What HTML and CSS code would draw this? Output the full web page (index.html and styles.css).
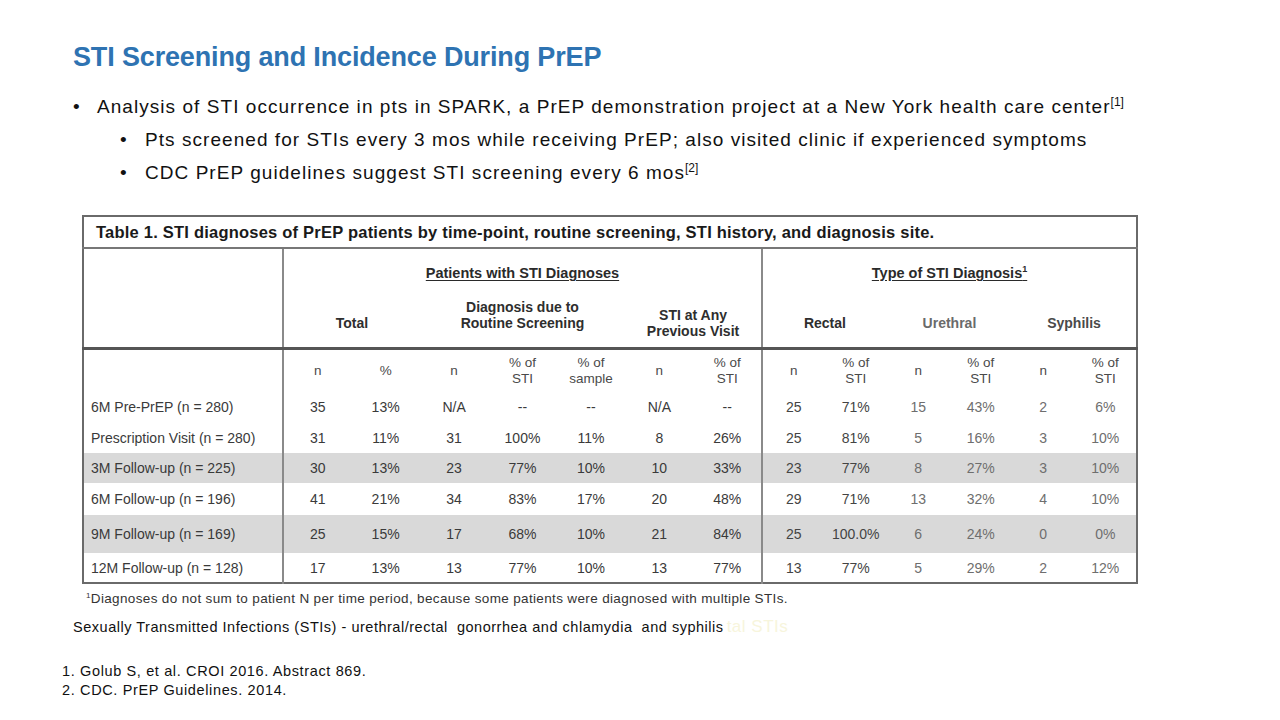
FILE: index.html
```html
<!DOCTYPE html>
<html>
<head>
<meta charset="utf-8">
<link rel="stylesheet" href="styles.css">
</head>
<body>
<div class="slide">
  <h1 class="title">STI Screening and Incidence During PrEP</h1>
  <ul class="bullets">
    <li class="l1">Analysis of STI occurrence in pts in SPARK, a PrEP demonstration project at a New York health care center<sup>[1]</sup></li>
    <li class="l2">Pts screened for STIs every 3 mos while receiving PrEP; also visited clinic if experienced symptoms</li>
    <li class="l2">CDC PrEP guidelines suggest STI screening every 6 mos<sup>[2]</sup></li>
  </ul>
  <div class="table-wrap">
    <table class="sti">
      <colgroup>
        <col class="c-label">
        <col class="c-l"><col class="c-l"><col class="c-l"><col class="c-l"><col class="c-l"><col class="c-l"><col class="c-l">
        <col class="c-r"><col class="c-r"><col class="c-r"><col class="c-r"><col class="c-r"><col class="c-r">
      </colgroup>
      <tr class="cap-row">
        <td colspan="14" class="caption">Table 1. STI diagnoses of PrEP patients by time-point, routine screening, STI history, and diagnosis site.</td>
      </tr>
      <tr class="h1-row">
        <td rowspan="2" class="lab-blank vdiv"></td>
        <td colspan="7" class="grp vdiv"><span class="u">Patients with STI Diagnoses</span></td>
        <td colspan="6" class="grp"><span class="u">Type of STI Diagnosis<sup>1</sup></span></td>
      </tr>
      <tr class="h2-row">
        <td colspan="2" class="sub">Total</td>
        <td colspan="3" class="sub">Diagnosis due to<br>Routine Screening</td>
        <td colspan="2" class="sub low vdiv">STI at Any<br>Previous Visit</td>
        <td colspan="2" class="sub">Rectal</td>
        <td colspan="2" class="sub lt">Urethral</td>
        <td colspan="2" class="sub mid">Syphilis</td>
      </tr>
      <tr class="h3-row">
        <td class="vdiv"></td>
        <td>n</td><td>%</td><td>n</td><td>% of<br>STI</td><td>% of<br>sample</td><td>n</td><td class="vdiv">% of<br>STI</td>
        <td>n</td><td>% of<br>STI</td><td>n</td><td>% of<br>STI</td><td>n</td><td>% of<br>STI</td>
      </tr>
      <tr class="d r1">
        <td class="lab vdiv">6M Pre-PrEP (n = 280)</td>
        <td>35</td><td>13%</td><td>N/A</td><td>--</td><td>--</td><td>N/A</td><td class="vdiv">--</td>
        <td class="dk">25</td><td class="dk">71%</td><td>15</td><td>43%</td><td>2</td><td>6%</td>
      </tr>
      <tr class="d r2">
        <td class="lab vdiv">Prescription Visit (n = 280)</td>
        <td>31</td><td>11%</td><td>31</td><td>100%</td><td>11%</td><td>8</td><td class="vdiv">26%</td>
        <td class="dk">25</td><td class="dk">81%</td><td>5</td><td>16%</td><td>3</td><td>10%</td>
      </tr>
      <tr class="d r3 shade">
        <td class="lab vdiv">3M Follow-up (n = 225)</td>
        <td>30</td><td>13%</td><td>23</td><td>77%</td><td>10%</td><td>10</td><td class="vdiv">33%</td>
        <td class="dk">23</td><td class="dk">77%</td><td>8</td><td>27%</td><td>3</td><td>10%</td>
      </tr>
      <tr class="d r4">
        <td class="lab vdiv">6M Follow-up (n = 196)</td>
        <td>41</td><td>21%</td><td>34</td><td>83%</td><td>17%</td><td>20</td><td class="vdiv">48%</td>
        <td class="dk">29</td><td class="dk">71%</td><td>13</td><td>32%</td><td>4</td><td>10%</td>
      </tr>
      <tr class="d r5 shade">
        <td class="lab vdiv">9M Follow-up (n = 169)</td>
        <td>25</td><td>15%</td><td>17</td><td>68%</td><td>10%</td><td>21</td><td class="vdiv">84%</td>
        <td class="dk">25</td><td class="dk">100.0%</td><td>6</td><td>24%</td><td>0</td><td>0%</td>
      </tr>
      <tr class="d r6">
        <td class="lab vdiv">12M Follow-up (n = 128)</td>
        <td>17</td><td>13%</td><td>13</td><td>77%</td><td>10%</td><td>13</td><td class="vdiv">77%</td>
        <td class="dk">13</td><td class="dk">77%</td><td>5</td><td>29%</td><td>2</td><td>12%</td>
      </tr>
    </table>
    <p class="tnote"><sup>1</sup>Diagnoses do not sum to patient N per time period, because some patients were diagnosed with multiple STIs.</p>
  </div>
  <p class="defn">Sexually Transmitted Infections (STIs) - urethral/rectal&nbsp; gonorrhea and chlamydia&nbsp; and syphilis<span class="ghost">tal STIs</span></p>
  <ol class="refs">
    <li>Golub S, et al. CROI 2016. Abstract 869.</li>
    <li>CDC. PrEP Guidelines. 2014.</li>
  </ol>
</div>
</body>
</html>
```
FILE: styles.css
```css
html, body {
  margin: 0;
  padding: 0;
  background: #ffffff;
}
.slide {
  width: 1280px;
  height: 720px;
  box-sizing: border-box;
  padding: 39px 0 0 0;
  font-family: "Liberation Sans", Arial, sans-serif;
  color: #111;
  overflow: hidden;
}
.title {
  margin: 0 0 0 73px;
  font-size: 27px;
  line-height: 36px;
  font-weight: bold;
  color: #2e73b2;
  letter-spacing: -0.15px;
}
.bullets {
  list-style: none;
  margin: 15px 0 0 0;
  padding: 0;
  font-size: 19px;
  line-height: 33px;
  letter-spacing: 1.05px;
  color: #111;
}
.bullets li {
  position: relative;
}
.bullets li::before {
  content: "•";
  position: absolute;
  top: 0;
}
.bullets .l1 {
  padding-left: 97px;
}
.bullets .l1::before {
  left: 73px;
}
.bullets .l2 {
  padding-left: 145px;
}
.bullets .l2::before {
  left: 120px;
}
.bullets sup {
  font-size: 12px;
  line-height: 0;
  vertical-align: 7px;
  letter-spacing: 0;
}
.table-wrap {
  margin: 26px 0 0 82px;
  width: 1054px;
}
.sti {
  border-collapse: collapse;
  table-layout: fixed;
  width: 1054px;
  border: 2px solid #6a6a6a;
  font-size: 14px;
  color: #3c3c3c;
}
.c-label { width: 200px; }
.c-l { width: 68.43px; }
.c-r { width: 62.5px; }
.sti td {
  padding: 0;
  text-align: center;
  vertical-align: middle;
}
.sti .vdiv {
  border-right: 2px solid #8a8a8a;
}
.cap-row td {
  height: 30px;
  border-bottom: 2px solid #777;
  text-align: left;
  padding-left: 12px;
  font-weight: bold;
  font-size: 16.5px;
  letter-spacing: 0.22px;
  color: #1a1a1a;
}
.h1-row td {
  height: 48px;
}
.grp {
  font-weight: bold;
  font-size: 14.5px;
  color: #2a2a2a;
  vertical-align: middle;
  padding-top: 0 !important;
}
.grp .u {
  text-decoration: underline;
  text-underline-offset: 2px;
}
.grp sup {
  font-size: 9px;
  line-height: 0;
  vertical-align: 6px;
}
.lab-blank {
  border-bottom: 3px solid #555;
}
.h2-row td {
  height: 34px;
  border-bottom: 3px solid #555;
  vertical-align: bottom;
  padding-bottom: 16px;
}
.sub {
  font-weight: bold;
  font-size: 14px;
  line-height: 16px;
  color: #2e2e2e;
}
.h2-row td.sub.low {
  padding-bottom: 8px;
}
.sub.lt {
  color: #6a6a6a;
}
.sub.mid {
  color: #4a4a4a;
}
.h3-row td {
  height: 42px;
  font-size: 13.5px;
  line-height: 16px;
  color: #4a4a4a;
}
.d td {
  height: 30px;
  font-size: 14px;
  color: #6e6e6e;
}
.d td:nth-child(-n+8) {
  color: #3a3a3a;
}
.d td.dk {
  color: #444;
}
.d td.lab {
  text-align: left;
  padding-left: 7px;
  color: #3a3a3a;
  font-size: 14px;
}
.d.r2 td { height: 31px; }
.d.r4 td { height: 32px; }
.d.r5 td { height: 38px; }
.d.r6 td { height: 29px; }
.shade td {
  background: #d9d9d9;
}
.tnote {
  margin: 7px 0 0 4px;
  font-size: 13.5px;
  color: #333;
  letter-spacing: 0.35px;
}
.tnote sup {
  font-size: 8px;
  vertical-align: 5px;
  line-height: 0;
}
.defn {
  margin: 11px 0 0 73px;
  font-size: 14.5px;
  color: #111;
  letter-spacing: 0.52px;
}
.ghost {
  color: #f7f5dc;
  margin-left: 3px;
  font-size: 17px;
  letter-spacing: 0.5px;
}
.refs {
  margin: 25px 0 0 0;
  padding: 0 0 0 62px;
  list-style: none;
  counter-reset: r;
  font-size: 14.5px;
  line-height: 19px;
  color: #111;
  letter-spacing: 0.63px;
}
.refs li {
  counter-increment: r;
}
.refs li::before {
  content: counter(r) ". ";
}
```
